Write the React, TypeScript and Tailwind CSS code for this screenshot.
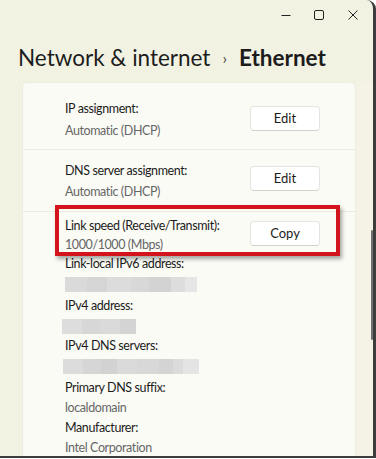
import React from "react";

const font = { fontFamily: 'Lato, "Noto Sans", Arial, sans-serif' };

function Blur({ widths, shades }: { widths: number[]; shades: string[] }) {
  return (
    <div className="flex h-[15px] blur-[0.6px]">
      {widths.map((w, i) => (
        <div key={i} style={{ width: w, background: shades[i % shades.length] }} className="h-full" />
      ))}
    </div>
  );
}

function Btn({ label }: { label: string }) {
  return (
    <div className="w-[70px] h-[25px] bg-white border border-[#e4e4e0] border-b-[#d2d2cc] rounded-[4px] flex items-center justify-center text-[13px] text-[#1b1b1b] leading-none">
      {label}
    </div>
  );
}

function Pair({ label, value, h = 40 }: { label: string; value: React.ReactNode; h?: number }) {
  return (
    <div className="flex flex-col" style={{ height: h }}>
      <div className="text-[12.5px] tracking-[-0.4px] leading-[20px] text-[#1b1b1b]">{label}</div>
      <div className="h-[20px] flex items-center text-[12.5px] tracking-[-0.4px] text-[#666666]">{value}</div>
    </div>
  );
}

export default function App() {
  return (
    <div className="w-[376px] h-[459px] bg-white overflow-hidden" style={font}>
      <div className="relative w-[376px] h-[458px] bg-[#f2f2e3] border-r-[3px] border-b-[2px] border-[#3d3d3d] rounded-tr-[9px] overflow-hidden flex flex-col">
        {/* title bar */}
        <div className="h-[30px] flex items-center justify-end shrink-0">
          <div className="w-[30px] flex justify-center">
            <svg width="10" height="10" viewBox="0 0 10 10"><path d="M0.5 5.5h9" stroke="#222" strokeWidth="1" /></svg>
          </div>
          <div className="w-[32px] flex justify-center ml-[2px]">
            <svg width="10" height="10" viewBox="0 0 10 10"><rect x="0.5" y="0.5" width="9" height="9" rx="1.5" fill="none" stroke="#222" strokeWidth="1" /></svg>
          </div>
          <div className="w-[36px] flex justify-center mr-[2px]">
            <svg width="10" height="10" viewBox="0 0 10 10"><path d="M0.5 0.5l9 9M9.5 0.5l-9 9" stroke="#222" strokeWidth="1" /></svg>
          </div>
        </div>
        {/* heading */}
        <div className="h-[52px] shrink-0 pl-[18px] pt-[12px] flex items-start text-[22.5px] leading-[32px] text-[#1c1c1c]">
          <span>Network &amp; internet</span>
          <span className="mx-[12px] text-[16px] text-[#444]">›</span>
          <span className="font-bold">Ethernet</span>
        </div>
        {/* content */}
        <div className="flex flex-1 min-h-0">
          <div className="ml-[22px] w-[334px] bg-[#fbfbf6] border border-[#ececdf] border-b-0 rounded-t-[5px] flex flex-col">
            <div className="h-[67px] border-b border-[#ebebe3] pl-[42px] pr-[35px] flex items-start justify-between shrink-0">
              <div className="pt-[15px]">
                <div className="text-[12.5px] tracking-[-0.4px] leading-[22px] text-[#1b1b1b]">IP assignment:</div>
                <div className="text-[12.5px] tracking-[-0.4px] leading-[22px] text-[#666666]">Automatic (DHCP)</div>
              </div>
              <div className="pt-[23px]"><Btn label="Edit" /></div>
            </div>
            <div className="h-[62px] border-b border-[#ebebe3] pl-[42px] pr-[35px] flex items-start justify-between shrink-0">
              <div className="pt-[10px]">
                <div className="text-[12.5px] tracking-[-0.4px] leading-[22px] text-[#1b1b1b]">DNS server assignment:</div>
                <div className="text-[12.5px] tracking-[-0.4px] leading-[20px] text-[#666666]">Automatic (DHCP)</div>
              </div>
              <div className="pt-[16px]"><Btn label="Edit" /></div>
            </div>
            <div className="pl-[42px] pr-[35px] pt-[4px] flex flex-col">
              <div className="flex items-start justify-between">
                <Pair label="Link speed (Receive/Transmit):" value="1000/1000 (Mbps)" h={38} />
                <div className="pt-[5px]"><Btn label="Copy" /></div>
              </div>
              <Pair
                label="Link-local IPv6 address:"
                value={<Blur widths={[22, 20, 24, 18, 22, 14, 12]} shades={["#dadada", "#d5d5d5", "#dcdcdc", "#d8d8d8", "#d3d3d3", "#dddddd", "#e6e6e6"]} />}
                h={42}
              />
              <Pair
                label="IPv4 address:"
                value={<div className="-ml-[3px]"><Blur widths={[20, 18, 20, 16]} shades={["#dddddd", "#d7d7d7", "#dadada", "#d4d4d4"]} /></div>}
                h={40}
              />
              <Pair
                label="IPv4 DNS servers:"
                value={<div className="-ml-[2px]"><Blur widths={[20, 18, 16, 20, 22, 14, 10, 16]} shades={["#dcdcdc", "#d6d6d6", "#d2d2d2", "#dadada", "#d8d8d8", "#d4d4d4", "#dbdbdb", "#e4e4e4"]} /></div>}
                h={42}
              />
              <Pair label="Primary DNS suffix:" value="localdomain" h={40} />
              <Pair label="Manufacturer:" value="Intel Corporation" h={40} />
            </div>
          </div>
          {/* scroll strip */}
          <div className="flex-1 bg-[#f4f3e6] relative">
            <div className="absolute right-[0px] top-[148px] w-[2px] h-[110px] rounded-full bg-[#707070]" />
          </div>
        </div>
        {/* annotation */}
        <div className="absolute left-[55px] top-[205px] w-[285px] h-[51px] border-[4px] border-[#d3141c] shadow-[2px_3px_4px_rgba(0,0,0,0.35)] pointer-events-none" />
      </div>
    </div>
  );
}
